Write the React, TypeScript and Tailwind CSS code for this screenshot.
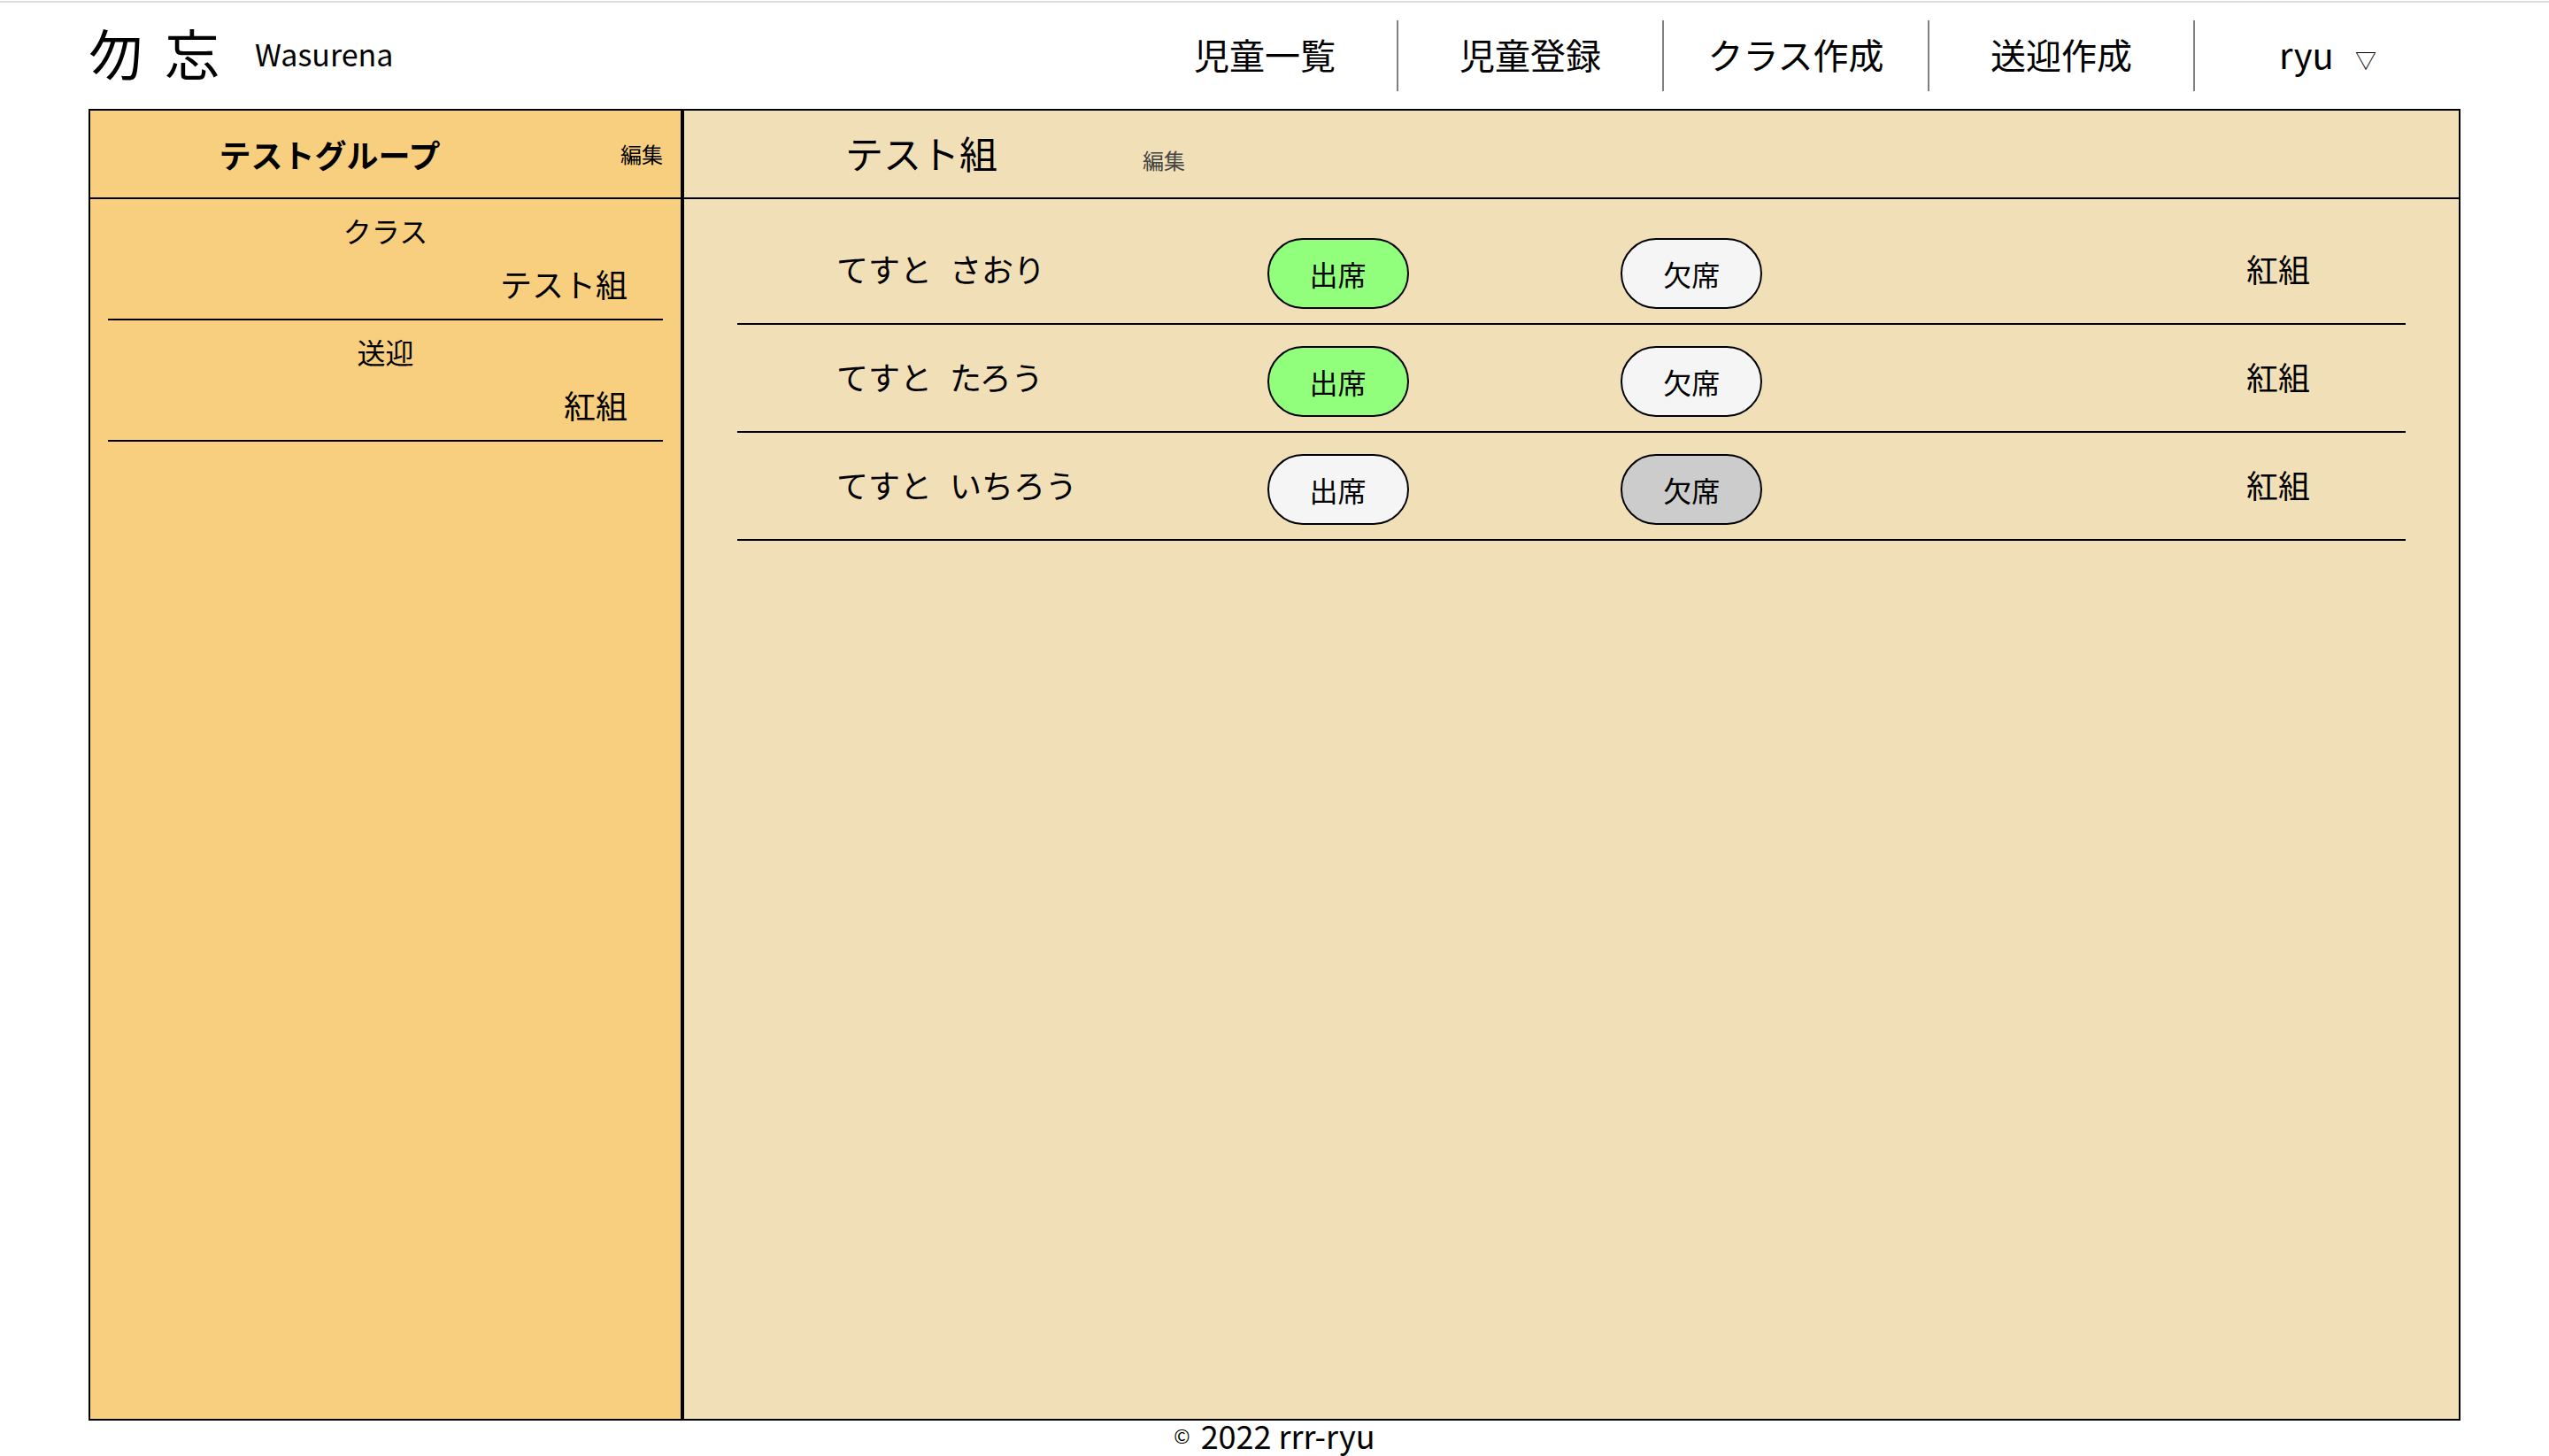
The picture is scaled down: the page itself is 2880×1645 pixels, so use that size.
const navLinks = ["児童一覧", "児童登録", "クラス作成", "送迎作成"];

const sections = [
  { title: "クラス", entry: "テスト組" },
  { title: "送迎", entry: "紅組" },
];

const children = [
  { family: "てすと", given: "さおり", attends: true, bus: "紅組" },
  { family: "てすと", given: "たろう", attends: true, bus: "紅組" },
  { family: "てすと", given: "いちろう", attends: false, bus: "紅組" },
];

const pill =
  "h-20 w-40 rounded-[40px] border-2 border-black text-[32px] leading-[48px]";

function Header() {
  return (
    <header className="mx-[100px] flex h-[120px] items-center justify-between">
      <a href="#" className="flex items-center pb-1">
        <span className="flex gap-6 pb-1 text-[62px] leading-[80px]">
          <span>勿</span>
          <span>忘</span>
        </span>
        <span className="ml-10 text-[34px] leading-[48px]">Wasurena</span>
      </a>
      <nav className="flex h-20 text-[40px] leading-[60px]">
        {navLinks.map((label) => (
          <a
            key={label}
            href="#"
            className="flex w-[300px] items-center justify-center border-r-2 border-[#808080] pb-1"
          >
            {label}
          </a>
        ))}
        <button
          type="button"
          className="flex w-[300px] items-center justify-center gap-6 pb-1"
        >
          <span>ryu</span>
          <span className="pt-3 text-[24px]">▽</span>
        </button>
      </nav>
    </header>
  );
}

function Sidebar() {
  return (
    <aside className="w-1/4 border-r-2 border-black bg-[#f7cf7f]">
      <div className="flex h-[100px] items-center border-b-2 border-black">
        <h2 className="flex-1 text-center text-[36px] leading-[54px] font-bold">
          テストグループ
        </h2>
        <a href="#" className="w-[126px] pr-5 text-right text-[24px] leading-[36px]">
          編集
        </a>
      </div>
      <div className="px-5">
        {sections.map((section) => (
          <section key={section.title} className="border-b-2 border-black pt-[10px] pb-[5px]">
            <h3 className="text-center text-[32px] leading-[50px]">{section.title}</h3>
            <a href="#" className="block pr-10 text-right text-[36px] leading-[70px]">
              {section.entry}
            </a>
          </section>
        ))}
      </div>
    </aside>
  );
}

function Roster() {
  return (
    <section className="flex-1 border-l-2 border-black bg-[#f1dfb8]">
      <div className="flex h-[100px] items-center border-b-2 border-black pb-1 pl-[182px]">
        <div className="flex items-baseline gap-[164px]">
          <h1 className="text-[43px] leading-[66px]">テスト組</h1>
          <a href="#" className="text-[24px] leading-[36px] text-[#444444]">
            編集
          </a>
        </div>
      </div>
      <div className="px-[60px] pt-5">
        <table className="w-full table-fixed border-separate border-spacing-0 text-[36px] leading-[54px]">
          <colgroup>
            <col className="w-[25.4%]" />
            <col className="w-[21.2%]" />
            <col className="w-[21.2%]" />
            <col />
          </colgroup>
          <tbody>
            {children.map((child) => (
              <tr key={child.given} className="h-[122px]">
                <td className="border-b-2 border-black pb-1 pl-[112px]">
                  <span className="flex gap-5">
                    <span>{child.family}</span>
                    <span>{child.given}</span>
                  </span>
                </td>
                <td className="border-b-2 border-black pt-2 text-center">
                  <button
                    type="button"
                    aria-pressed={child.attends}
                    className={`${pill} ${child.attends ? "bg-[#92ff7c]" : "bg-[#f5f5f5]"}`}
                  >
                    出席
                  </button>
                </td>
                <td className="border-b-2 border-black pt-2 text-center">
                  <button
                    type="button"
                    aria-pressed={!child.attends}
                    className={`${pill} ${child.attends ? "bg-[#f5f5f5]" : "bg-[#cccccc]"}`}
                  >
                    欠席
                  </button>
                </td>
                <td className="border-b-2 border-black pr-[108px] pb-1 text-right">
                  {child.bus}
                </td>
              </tr>
            ))}
          </tbody>
        </table>
      </div>
    </section>
  );
}

export default function App() {
  return (
    <div
      lang="ja"
      className="flex min-h-screen flex-col bg-white pt-px font-['Noto_Sans_CJK_JP',sans-serif] text-black"
    >
      <div className="h-0.5 bg-[#dcdedc]" />
      <Header />
      <main className="mx-[100px] flex flex-1 border-2 border-black">
        <Sidebar />
        <Roster />
      </main>
      <footer className="flex h-10 items-center justify-center gap-3 pb-2 text-[36px] leading-[32px]">
        <small className="text-[22px]">©</small>
        <span>2022 rrr-ryu</span>
      </footer>
    </div>
  );
}
